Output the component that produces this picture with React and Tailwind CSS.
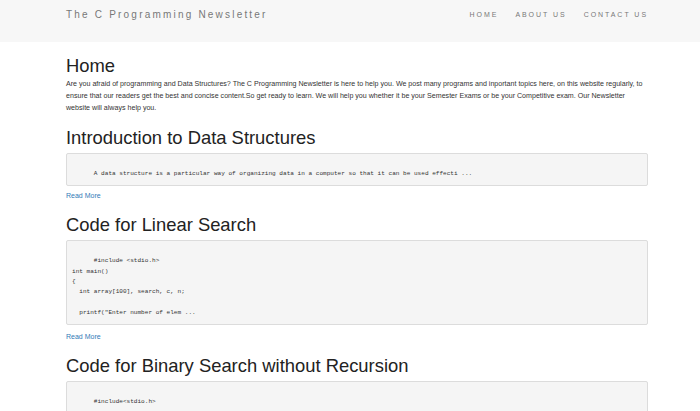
import React from "react";

function Pre({ children }) {
  return (
    <pre className="mt-[4px] rounded-[2px] border border-[#dcdcdc] bg-[#f5f5f5] px-[5px] py-[5px] font-['Liberation_Mono',monospace] text-[6.07px] leading-[10.4px] text-[#333] whitespace-pre overflow-hidden">
      {children}
    </pre>
  );
}

export default function App() {
  return (
    <div className="min-h-[411px] bg-white font-['Liberation_Sans',Arial,sans-serif] text-[#333]">
      <nav className="h-[42px] bg-[#f7f7f7]">
        <div className="ml-[66px] flex w-[582px] items-start justify-between pt-[8px]">
          <div className="text-[10px] leading-[14px] tracking-[2.2px] text-[#777]">The C Programming Newsletter</div>
          <div className="flex gap-[17px] pt-[2px] text-[7px] leading-[10px] tracking-[1.95px] text-[#777]">
            <span>HOME</span>
            <span>ABOUT US</span>
            <span>CONTACT US</span>
          </div>
        </div>
      </nav>
      <main className="ml-[66px] w-[582px]">
        <h1 className="mt-[13px] text-[18.4px] leading-[22px] text-[#222]">Home</h1>
        <p className="mt-[1px] text-[7.1px] leading-[12px]">
          Are you afraid of programming and Data Structures? The C Programming Newsletter is here to help you. We post many programs and inportant topics here, on this website regularly, to ensure that our readers get the best and concise content.So get ready to learn. We will help you whether it be your Semester Exams or be your Competitive exam. Our Newsletter website will always help you.
        </p>

        <h2 className="mt-[13px] text-[18.4px] leading-[22px] text-[#222]">Introduction to Data Structures</h2>
        <Pre>{"\n      A data structure is a particular way of organizing data in a computer so that it can be used effecti ..."}</Pre>
        <a className="mt-[4px] block text-[7px] leading-[12px] text-[#337ab7]">Read More</a>

        <h2 className="mt-[12px] text-[18.4px] leading-[22px] text-[#222]">Code for Linear Search</h2>
        <Pre>{"\n      #include <stdio.h>\nint main()\n{\n  int array[100], search, c, n;\n\n  printf(\"Enter number of elem ..."}</Pre>
        <a className="mt-[6px] block text-[7px] leading-[12px] text-[#337ab7]">Read More</a>

        <h2 className="mt-[12px] text-[18.4px] leading-[22px] text-[#222]">Code for Binary Search without Recursion</h2>
        <Pre>{"\n      #include<stdio.h>\n\n\n"}</Pre>
      </main>
    </div>
  );
}
